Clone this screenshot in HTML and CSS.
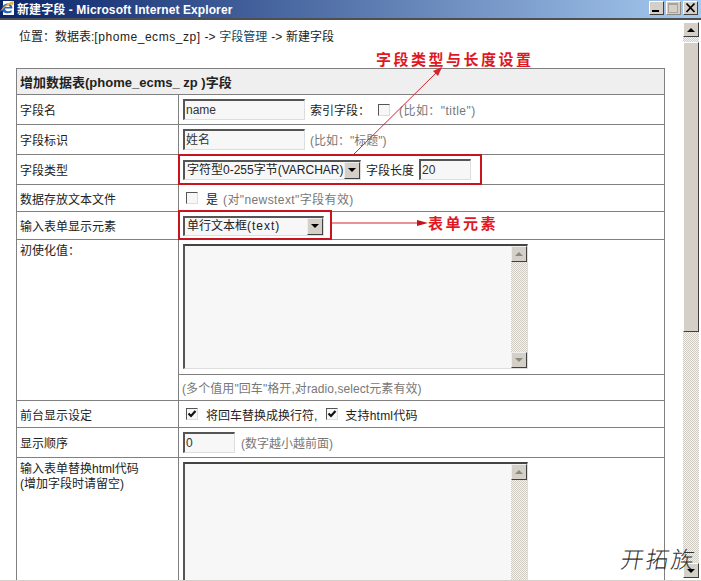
FILE: index.html
```html
<!DOCTYPE html>
<html lang="zh-CN">
<head>
<meta charset="utf-8">
<title>新建字段</title>
<link rel="stylesheet" href="styles.css">
</head>
<body>
<div class="window">
  <header class="titlebar">
    <svg class="ie" width="16" height="16" viewBox="0 0 16 16"><rect x="3" y="1" width="11" height="14" fill="#fff"/><path d="M2 9.500C2 5.500 5 3.500 7.800 3.500c3 0 4.700 2.200 4.700 5H5c0 3 4 3.500 6.500 1.500v2.500c-3.800 1.800-9.500.5-9.500-3zM5.300 7h4.500c0-2.200-4.300-2.200-4.500 0z" fill="#2a63c4"/><path d="M0 12C3 6 9 2 14 1c-1 2 0 3-1 4C11 3 5 6 0 12z" fill="#e5b53a"/></svg>
    <span class="title">新建字段 - Microsoft Internet Explorer</span>
    <span class="winbtns">
      <span class="winbtn"><svg width="13" height="12" viewBox="0 0 13 12"><rect x="2" y="8" width="7" height="2" fill="#000"/></svg></span>
      <span class="winbtn off"><svg width="13" height="12" viewBox="0 0 13 12"><rect x="1.500" y="1.500" width="9" height="9" fill="none" stroke="#a8a49c"/><rect x="1" y="1" width="10" height="2" fill="#a8a49c"/></svg></span>
      <span class="winbtn"><svg width="13" height="12" viewBox="0 0 13 12"><path d="M2.500 1.500l8 8.500M10.500 1.500l-8 8.500" stroke="#000" stroke-width="1.800"/></svg></span>
    </span>
  </header>
  <div class="body">
    <main class="content">
      <p class="crumb">位置：数据表:<span class="wide">[phome_ecms_zp]</span> -&gt; <a href="#">字段管理</a> -&gt; 新建字段</p>
      <table class="form">
        <colgroup><col class="c1"><col></colgroup>
        <tr class="r-head"><th colspan="2">增加数据表(phome_ecms_ zp )字段</th></tr>
        <tr class="r30"><td>字段名</td><td><span class="input w122">name</span><span class="lab">索引字段：</span><span class="check c-a"></span><span class="hint h1">(比如："title")</span></td></tr>
        <tr class="r30"><td>字段标识</td><td><span class="input w122">姓名</span><span class="hint h2">(比如："标题")</span></td></tr>
        <tr class="r30"><td>字段类型</td><td><span class="select w178"><span class="sel-text">字符型0-255字节(VARCHAR)</span><span class="sel-btn"><i></i></span></span><span class="lab">字段长度</span><span class="input w52 i-len">20</span></td></tr>
        <tr class="r27"><td>数据存放文本文件</td><td><span class="check"></span><span class="lab l3">是</span><span class="hint h3">(对"newstext"字段有效)</span></td></tr>
        <tr class="r28"><td>输入表单显示元素</td><td><span class="select w141"><span class="sel-text">单行文本框<span class="wider">(text)</span></span><span class="sel-btn"><i></i></span></span></td></tr>
        <tr class="r135"><td class="top" rowspan="2"><span class="label-b">初使化值：</span></td><td class="top"><div class="area a1"><div class="area-sb"><span class="sb-b up"><i></i></span><span class="sb-b dn"><i></i></span></div></div></td></tr>
        <tr class="r26"><td><span class="hint h4">(多个值用"回车"格开,对radio,select元素有效)</span></td></tr>
        <tr class="r27"><td>前台显示设定</td><td><span class="check on"><svg width="10" height="10" viewBox="0 0 10 10"><path d="M1.500 4.500l2.500 2.500L8.500 2" fill="none" stroke="#111" stroke-width="2.200"/></svg></span><span class="lab l3">将回车替换成换行符,</span><span class="check on c-b"><svg width="10" height="10" viewBox="0 0 10 10"><path d="M1.500 4.500l2.500 2.500L8.500 2" fill="none" stroke="#111" stroke-width="2.200"/></svg></span><span class="lab l4">支持html代码</span></td></tr>
        <tr class="r30"><td>显示顺序</td><td><span class="input w52">0</span><span class="hint h5">(数字越小越前面)</span></td></tr>
        <tr class="r-last"><td class="top"><span class="label-m">输入表单替换html代码<br>(增加字段时请留空)</span></td><td class="top"><div class="area a2"><div class="area-sb"><span class="sb-b up"><i></i></span></div></div></td></tr>
      </table>
    </main>
    <aside class="scrollbar">
      <span class="sb-btn"><i></i></span>
      <span class="dither d1"></span>
      <span class="thumb"></span>
      <span class="dither d2"></span>
      <span class="sb-btn down"><i></i></span>
    </aside>
  </div>
  <div class="note note-a">字段类型与长度设置</div>
  <div class="note note-b">表单元素</div>
  <div class="rbox rbox-a"></div>
  <div class="rbox rbox-b"></div>
  <svg class="arrows" width="701" height="581" viewBox="0 0 701 581">
    <path d="M353 155L438 71M332 223H420" fill="none" stroke="#d8222a" stroke-width="1"/>
    <path d="M442 67L433 71L438 76Z" fill="#d8222a"/>
    <path d="M428 223L417 220V226Z" fill="#c8101c"/>
  </svg>
  <div class="mark">开拓族</div>
</div>
</body>
</html>
```
FILE: styles.css
```css
* { box-sizing: border-box; }
html, body { margin: 0; padding: 0; background: #fff; }
body { width: 701px; height: 581px; overflow: hidden; font: 12px "Liberation Sans", "Noto Sans CJK SC", sans-serif; color: #222; }
.window { position: relative; width: 701px; height: 581px; display: flex; flex-direction: column; overflow: hidden; border-bottom: 1px solid #d4d0c8; }
.titlebar { flex: none; height: 20px; display: flex; align-items: center; padding: 0 3px 2px 0; background: linear-gradient(90deg, #0a246a, #a6caf0); border-bottom: 2px solid #4f4f4f; }
.ie { flex: none; margin-right: 1px; }
.title { flex: 1; color: #fff; font-size: 12px; font-weight: 700; white-space: nowrap; letter-spacing: 0.1px; }
.winbtns { display: flex; gap: 2px; }
.winbtn { width: 15px; height: 14px; background: #d4d0c8; display: flex; align-items: center; justify-content: center; border: 1px solid; border-color: #fff #404040 #404040 #fff; }
.off { border-color: #fff #888 #888 #fff; }
.body { flex: 1; min-height: 0; display: flex; }
.content { width: 683px; padding: 9px 0 0 16px; overflow: hidden; }
.crumb { margin: 0 0 23px 3px; height: 16px; line-height: 16px; font-size: 12px; white-space: nowrap; word-spacing: 0.5px; }
.crumb a { color: #0d4a68; text-decoration: none; }
.wide { letter-spacing: 0.55px; }
.wider { letter-spacing: 1px; }
.form { width: 649px; table-layout: fixed; border-collapse: collapse; border: 1px solid #808080; }
.c1 { width: 162px; }
.form th, .form td { border: 1px solid #808080; padding: 0 3px; vertical-align: middle; font-weight: 400; text-align: left; white-space: nowrap; overflow: hidden; }
.form td + td { padding-left: 4px; }
.form th { background: #efefef; font-weight: 700; font-size: 13px; color: #222; }
.form td.top { vertical-align: top; }
.r-head { height: 26px; }
.r30 { height: 30px; }
.r27 { height: 27px; }
.r28 { height: 28px; }
.r26 { height: 26px; }
.r135 { height: 135px; }
.r-last { height: 140px; }
.input { display: inline-block; vertical-align: middle; height: 21px; line-height: 19px; padding-left: 1px; background: #f7f7f7; border-style: solid; border-color: #555 #ddd #ddd #555; border-width: 2px 1px 1px 2px; color: #333; }
.w122 { width: 122px; }
.w52 { width: 52px; }
.i-len { margin-left: 5px; }
.lab { display: inline-block; vertical-align: middle; margin-left: 5px; color: #222; }
.hint { display: inline-block; vertical-align: middle; margin-left: 5px; color: #777; }
.h1 { margin-left: 9px; letter-spacing: 0.45px; }
.h2 { margin-left: 5px; }
.h3 { margin-left: 5px; letter-spacing: 0.4px; }
.h4 { margin-left: 0; letter-spacing: 0.08px; }
.h5 { margin-left: 6px; }
.l3 { margin-left: 8px; }
.l4 { margin-left: 7px; letter-spacing: 0.2px; }
.check { display: inline-flex; align-items: center; justify-content: center; vertical-align: middle; width: 12px; height: 12px; margin-left: 3px; background: #f7f7f7; border: 1px solid; border-color: #555 #ddd #ddd #555; }
.c-a { margin-left: 8px; }
.c-b { margin-left: 9px; }
.select { display: inline-flex; vertical-align: middle; align-items: stretch; height: 20px; background: #f7f7f7; border-style: solid; border-color: #555 #ddd #ddd #555; border-width: 2px 1px 1px 2px; }
.w178 { width: 178px; }
.w141 { width: 141px; }
.sel-text { flex: 1; padding-left: 2px; line-height: 16px; color: #222; overflow: hidden; }
.sel-btn { flex: none; width: 16px; background: #d4d0c8; border: 1px solid; border-color: #eee #404040 #404040 #eee; display: flex; align-items: center; justify-content: center; }
.sel-btn i, .sb-btn i { width: 0; height: 0; border: 4px solid transparent; border-top-color: #000; border-bottom-width: 0; }
.label-b { display: block; padding-top: 1px; }
.label-m { display: block; padding-top: 4px; line-height: 15px; }
.area { position: relative; width: 345px; height: 125px; margin-top: 4px; background: #f7f7f7; border-style: solid; border-color: #444 #ddd #ddd #555; border-width: 2px 1px 1px 2px; }
.a2 { height: 140px; }
.area-sb { position: absolute; top: 0; right: 0; bottom: 0; width: 16px; display: flex; flex-direction: column; justify-content: space-between; background: repeating-conic-gradient(#cfcbc3 0 25%, #f4f4f2 0 50%) 0 0 / 2px 2px; }
.sb-b { width: 16px; height: 16px; background: #d4d0c8; border: 1px solid; border-color: #eee #404040 #404040 #eee; display: flex; align-items: center; justify-content: center; }
.sb-b i { width: 0; height: 0; border: 4px solid transparent; border-bottom-color: #8a8a84; border-top-width: 0; }
.sb-b.dn i { border-bottom-width: 0; border-top-width: 4px; border-bottom-color: transparent; border-top-color: #8a8a84; }
.scrollbar { flex: none; width: 16px; margin: 2px 0; display: flex; flex-direction: column; }
.sb-btn { flex: none; height: 15px; background: #d4d0c8; border: 1px solid; border-color: #fff #404040 #404040 #fff; display: flex; align-items: center; justify-content: center; }
.sb-btn:first-child i { border-top-width: 0; border-bottom: 4px solid #000; border-top-color: transparent; }
.dither { display: block; background: repeating-conic-gradient(#cfcbc3 0 25%, #f4f4f2 0 50%) 0 0 / 2px 2px; }
.d1 { height: 5px; }
.d2 { flex: 1; }
.thumb { flex: none; height: 290px; background: #d4d0c8; border: 1px solid; border-color: #fff #404040 #404040 #fff; }
.note { position: absolute; color: #e01824; font-weight: 700; font-size: 15px; line-height: 17px; white-space: nowrap; letter-spacing: 2.500px; }
.note-a { left: 376px; top: 51px; }
.note-b { left: 428px; top: 215px; }
.rbox { position: absolute; border: 2px solid #c8141e; }
.rbox-a { left: 178px; top: 154px; width: 304px; height: 31px; }
.rbox-b { left: 178px; top: 210px; width: 154px; height: 30px; }
.arrows { position: absolute; left: 0; top: 0; pointer-events: none; }
.mark { position: absolute; left: 621px; top: 545px; font-size: 23px; line-height: 30px; font-weight: 300; letter-spacing: 2px; color: #333; white-space: nowrap; transform: skewX(-10deg); }
```
